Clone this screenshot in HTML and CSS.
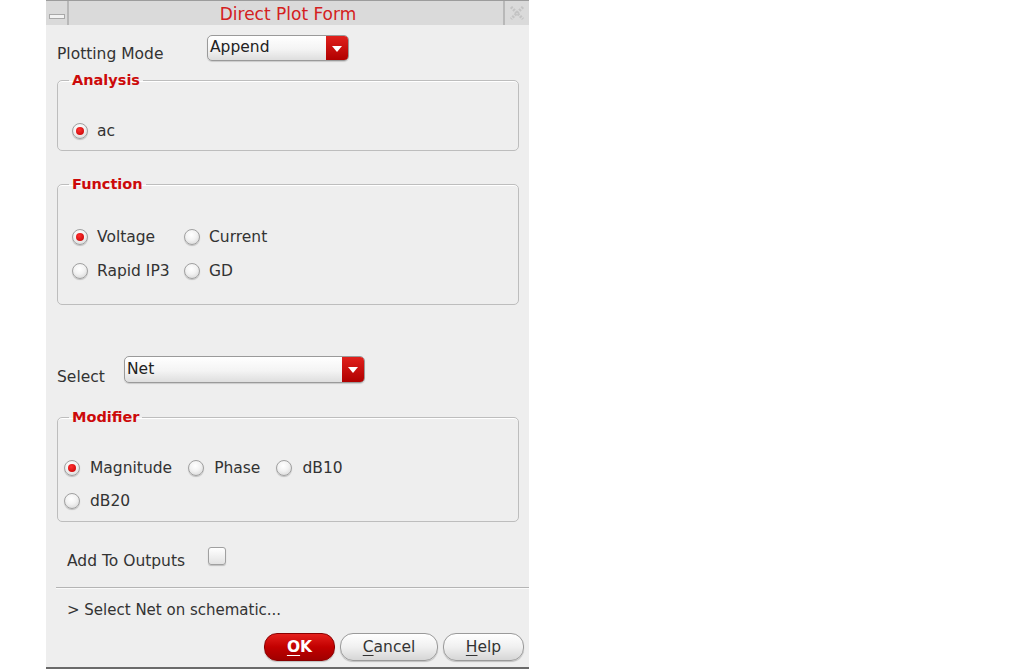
FILE: index.html
```html
<!DOCTYPE html>
<html>
<head>
<meta charset="utf-8">
<link rel="stylesheet" href="styles.css">
</head>
<body>
<div class="dialog">
  <div class="titlebar">
    <div class="tb-btn tb-left"><span class="minbar"></span></div>
    <div class="title">Direct Plot Form</div>
    <div class="tb-btn tb-right">
      <svg class="xicon" width="16" height="16" viewBox="0 0 16 16">
        <path d="M2 2 L14 14 M14 2 L2 14" stroke="#c4c4c4" stroke-width="3" stroke-dasharray="2 1.2" fill="none"/>
      </svg>
    </div>
  </div>
  <div class="content">
    <div class="row mode-row">
      <span class="label mode-label">Plotting Mode</span>
      <div class="combo combo-mode"><span class="combo-text">Append</span><span class="combo-arrow"></span></div>
    </div>

    <fieldset class="group analysis">
      <legend>Analysis</legend>
      <div class="radios">
        <label class="radio-item"><span class="radio on"></span><span>ac</span></label>
      </div>
    </fieldset>

    <fieldset class="group function">
      <legend>Function</legend>
      <div class="radio-grid">
        <label class="radio-item"><span class="radio on"></span><span>Voltage</span></label>
        <label class="radio-item"><span class="radio"></span><span>Current</span></label>
        <label class="radio-item"><span class="radio"></span><span>Rapid IP3</span></label>
        <label class="radio-item"><span class="radio"></span><span>GD</span></label>
      </div>
    </fieldset>

    <div class="row select-row">
      <span class="label select-label">Select</span>
      <div class="combo combo-select"><span class="combo-text">Net</span><span class="combo-arrow"></span></div>
    </div>

    <fieldset class="group modifier">
      <legend>Modifier</legend>
      <div class="mod-rows">
        <div class="mod-row">
          <label class="radio-item"><span class="radio on"></span><span>Magnitude</span></label>
          <label class="radio-item"><span class="radio"></span><span>Phase</span></label>
          <label class="radio-item"><span class="radio"></span><span>dB10</span></label>
        </div>
        <div class="mod-row">
          <label class="radio-item"><span class="radio"></span><span>dB20</span></label>
        </div>
      </div>
    </fieldset>

    <div class="row outputs-row">
      <span class="label outputs-label">Add To Outputs</span>
      <span class="checkbox"></span>
    </div>
  </div>
  <div class="separator"></div>
  <div class="status">&gt; Select Net on schematic...</div>
  <div class="buttons">
    <button class="btn ok"><u>O</u>K</button>
    <button class="btn cancel"><u>C</u>ancel</button>
    <button class="btn help"><u>H</u>elp</button>
  </div>
</div>
</body>
</html>
```
FILE: styles.css
```css
html, body {
  margin: 0;
  padding: 0;
  background: #ffffff;
}
body {
  font-family: "DejaVu Sans", sans-serif;
  color: #333333;
}
.dialog {
  margin-left: 46px;
  width: 483px;
  height: 669px;
  box-sizing: border-box;
  background: #eeeeee;
  border-top: 1px solid #9c9c9c;
  border-bottom: 2px solid #6a6a6a;
  display: flex;
  flex-direction: column;
}
.titlebar {
  height: 24px;
  background: #dadada;
  display: flex;
  align-items: stretch;
}
.tb-btn {
  width: 21px;
  display: flex;
  align-items: center;
  justify-content: center;
}
.tb-left {
  border-right: 2px solid #b8b8b8;
}
.minbar {
  display: block;
  width: 14px;
  height: 3px;
  margin-top: 6px;
  background: #f2f2f2;
  border: 1px solid #a8a8a8;
}
.tb-right {
  width: 24px;
  border-left: 2px solid #b8b8b8;
}
.xicon {
  display: block;
}
.title {
  flex: 1;
  text-align: center;
  font-size: 17px;
  line-height: 27px;
  color: #d42020;
  padding-left: 4px;
}
.content {
  padding: 0 10px 0 11px;
  display: flex;
  flex-direction: column;
}
.label {
  font-size: 15.5px;
  line-height: 18px;
}
.row {
  display: flex;
}
.mode-row {
  margin-top: 10px;
  height: 26px;
}
.mode-label {
  width: 150px;
  align-self: flex-end;
  margin-bottom: -2px;
}
.combo {
  box-sizing: border-box;
  border: 1px solid #9a9a9a;
  border-radius: 5px;
  background: linear-gradient(#ffffff, #f4f4f4 55%, #dedede);
  display: flex;
  align-items: center;
  overflow: hidden;
  box-shadow: 0 1px 1px rgba(0,0,0,0.15);
}
.combo-text {
  flex: 1;
  font-size: 15.5px;
  padding-left: 2px;
  color: #222;
  margin-top: -2px;
}
.combo-arrow {
  width: 22px;
  align-self: stretch;
  background: linear-gradient(#e0201c, #b00000);
  position: relative;
}
.combo-arrow::after {
  content: "";
  position: absolute;
  left: 6px;
  top: 10px;
  border-left: 5px solid transparent;
  border-right: 5px solid transparent;
  border-top: 6px solid #ffffff;
}
.combo-mode {
  width: 142px;
  height: 26px;
}
.group {
  margin: 0;
  padding: 0;
  min-width: 0;
  border: 1px solid #bdbdbd;
  border-radius: 5px;
  box-shadow: 0 1px 0 #ffffff inset;
}
.group legend {
  margin-left: 11px;
  padding: 0 3px 0 3px;
  font-weight: bold;
  font-size: 14.5px;
  line-height: 16px;
  color: #cc0a0a;
}
.analysis {
  margin-top: 11px;
  height: 79px;
  box-sizing: border-box;
}
.radios {
  padding: 33px 0 0 14px;
}
.radio-item {
  display: flex;
  align-items: center;
  gap: 9px;
  font-size: 15.5px;
  line-height: 20px;
  height: 20px;
  white-space: nowrap;
}
.radio {
  width: 16px;
  height: 16px;
  box-sizing: border-box;
  border-radius: 50%;
  border: 1px solid #a0a0a0;
  background: radial-gradient(circle at 45% 35%, #ffffff 0%, #f2f2f2 45%, #cfcfcf 100%);
  box-shadow: 0 1px 1px rgba(0,0,0,0.2);
  display: flex;
  align-items: center;
  justify-content: center;
  flex: none;
}
.radio.on::after {
  content: "";
  width: 8px;
  height: 8px;
  border-radius: 50%;
  background: radial-gradient(circle at 40% 35%, #ff3030, #c00000);
}
.function {
  margin-top: 25px;
  height: 129px;
  box-sizing: border-box;
}
.radio-grid {
  display: grid;
  grid-template-columns: 112px auto;
  row-gap: 14px;
  padding: 35px 0 0 14px;
}
.select-row {
  margin-top: 51px;
  height: 27px;
}
.select-label {
  width: 67px;
  align-self: flex-end;
  margin-bottom: -3px;
}
.combo-select {
  width: 241px;
  height: 27px;
}
.modifier {
  margin-top: 26px;
  height: 113px;
  box-sizing: border-box;
}
.mod-rows {
  padding: 33px 0 0 6px;
  display: flex;
  flex-direction: column;
  gap: 13px;
}
.mod-row {
  display: flex;
  gap: 16px;
}
.mod-row .radio-item {
  gap: 10px;
}
.outputs-row {
  margin-top: 25px;
  height: 18px;
  padding-left: 10px;
}
.outputs-label {
  width: 141px;
  align-self: flex-end;
  margin-bottom: -5px;
}
.checkbox {
  width: 18px;
  height: 18px;
  box-sizing: border-box;
  border: 1px solid #a0a0a0;
  border-radius: 3px;
  background: linear-gradient(#ffffff, #e2e2e2);
  box-shadow: 0 1px 1px rgba(0,0,0,0.2);
}
.separator {
  margin: 22px 0 0 10px;
  height: 1px;
  background: #b4b4b4;
  border-bottom: 1px solid #fafafa;
}
.status {
  margin-top: 11px;
  padding-left: 21px;
  font-size: 15px;
  line-height: 20px;
}
.buttons {
  margin-top: 13px;
  display: flex;
  justify-content: flex-end;
  gap: 5px;
  padding-right: 5px;
}
.btn {
  height: 28px;
  border-radius: 13px;
  border: 1px solid #9a9a9a;
  background: linear-gradient(#ffffff, #f0f0f0 50%, #d6d6d6);
  font-family: "DejaVu Sans", sans-serif;
  font-size: 15.5px;
  color: #333;
  padding: 0;
  box-shadow: 0 1px 1px rgba(0,0,0,0.2);
}
.btn u {
  text-underline-offset: 3px;
}
.ok {
  width: 71px;
  background: linear-gradient(#e4201c, #c20000 50%, #a00000);
  border-color: #8a0000;
  color: #ffffff;
  font-weight: bold;
}
.cancel {
  width: 98px;
}
.help {
  width: 81px;
}
```
